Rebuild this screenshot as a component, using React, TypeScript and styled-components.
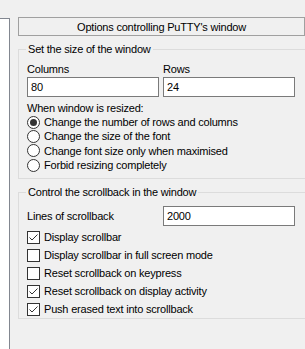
import React from 'react'
import styled, { createGlobalStyle } from 'styled-components'

const GlobalStyle = createGlobalStyle`
  html, body {
    margin: 0;
    padding: 0;
    background: #f0f0f0;
  }
  body {
    font-family: "Liberation Sans", Arial, sans-serif;
    font-size: 11px;
    letter-spacing: -0.2px;
    color: #000;
  }
`

const Window = styled.div`
  display: flex;
  height: 349px;
  width: 305px;
  overflow: hidden;
`

const TreeStrip = styled.div`
  width: 9px;
  margin-top: 18px;
  background: #fff;
  border-right: 1px solid #828790;
  border-top: 1px solid #828790;
`

const Panel = styled.div`
  display: flex;
  flex-direction: column;
  padding: 17px 0 0 8px;
  width: 287px;
`

const Header = styled.div`
  height: 17px;
  border: 1px solid #a0a0a0;
  display: flex;
  align-items: center;
  justify-content: center;
`

const Group = styled.div<{ $height: number }>`
  position: relative;
  margin-top: 13px;
  height: ${p => p.$height}px;
  width: 284px;
  border: 1px solid #dcdcdc;
  display: flex;
  flex-direction: column;
  padding: 0 0 0 8px;
`

const Legend = styled.span`
  position: absolute;
  top: -8px;
  left: 7px;
  padding: 0 2px;
  background: #f0f0f0;
  line-height: 14px;
`

const Row = styled.div<{ $h: number }>`
  display: flex;
  align-items: center;
  height: ${p => p.$h}px;
`

const Cell = styled.div`
  width: 136px;
`

const Input = styled.div<{ $w?: number }>`
  box-sizing: border-box;
  width: ${p => p.$w ?? 132}px;
  height: 20px;
  border: 1px solid #7a7a7a;
  background: #fff;
  padding: 0 3px;
  display: flex;
  align-items: center;
`

const Choice = styled.label`
  display: flex;
  align-items: center;
  gap: 4px;
`

const RadioDot = styled.span<{ $on?: boolean }>`
  box-sizing: border-box;
  width: 13px;
  height: 13px;
  border: 1px solid #333;
  border-radius: 50%;
  background: #fff;
  display: flex;
  align-items: center;
  justify-content: center;
  &::after {
    content: '';
    width: 7px;
    height: 7px;
    border-radius: 50%;
    background: ${p => (p.$on ? '#333' : 'transparent')};
  }
`

const Box = styled.span`
  box-sizing: border-box;
  width: 13px;
  height: 13px;
  border: 1px solid #333;
  background: #fff;
  display: flex;
`

function Radio({ on, children }: { on?: boolean; children: React.ReactNode }) {
  return (
    <Choice>
      <RadioDot $on={on} />
      {children}
    </Choice>
  )
}

function Check({ on, children }: { on?: boolean; children: React.ReactNode }) {
  return (
    <Choice>
      <Box>
        {on && (
          <svg width="11" height="11" viewBox="0 0 11 11">
            <path d="M1.5 5.5 L4 8 L9.5 2.5" fill="none" stroke="#333" strokeWidth="1" />
          </svg>
        )}
      </Box>
      {children}
    </Choice>
  )
}

export default function App() {
  return (
    <Window>
      <GlobalStyle />
      <TreeStrip />
      <Panel>
        <Header>Options controlling PuTTY's window</Header>
        <Group $height={128}>
          <Legend>Set the size of the window</Legend>
          <Row $h={13} style={{ marginTop: 12 }}>
            <Cell>Columns</Cell>
            <Cell>Rows</Cell>
          </Row>
          <Row $h={20} style={{ marginTop: 2 }}>
            <Cell><Input>80</Input></Cell>
            <Cell><Input>24</Input></Cell>
          </Row>
          <Row $h={14} style={{ marginTop: 4 }}>When window is resized:</Row>
          <Row $h={14}><Radio on>Change the number of rows and columns</Radio></Row>
          <Row $h={14}><Radio>Change the size of the font</Radio></Row>
          <Row $h={15}><Radio>Change font size only when maximised</Radio></Row>
          <Row $h={14}><Radio>Forbid resizing completely</Radio></Row>
        </Group>
        <Group $height={125}>
          <Legend>Control the scrollback in the window</Legend>
          <Row $h={20} style={{ marginTop: 13 }}>
            <Cell>Lines of scrollback</Cell>
            <Cell><Input>2000</Input></Cell>
          </Row>
          <Row $h={18} style={{ marginTop: 2 }}><Check on>Display scrollbar</Check></Row>
          <Row $h={18}><Check>Display scrollbar in full screen mode</Check></Row>
          <Row $h={18}><Check>Reset scrollback on keypress</Check></Row>
          <Row $h={18}><Check on>Reset scrollback on display activity</Check></Row>
          <Row $h={18}><Check on>Push erased text into scrollback</Check></Row>
        </Group>
      </Panel>
    </Window>
  )
}
